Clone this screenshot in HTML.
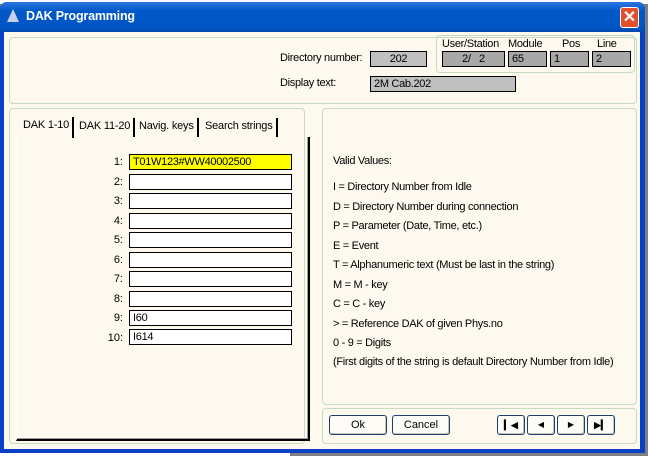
<!DOCTYPE html>
<html><head><style>
*{margin:0;padding:0;box-sizing:border-box}
body{width:648px;height:456px;overflow:hidden;background:#808080;font-family:"Liberation Sans",sans-serif;font-size:11px;color:#000;position:relative}
.a{position:absolute}
.t{position:absolute;white-space:nowrap;letter-spacing:-0.3px}
.grp{position:absolute;border:1px solid #c5dcc0;border-radius:4px}
.fld{position:absolute;border:1px solid #000;background:#c0c0c0;height:16px;line-height:14px;padding-left:3px;white-space:nowrap;letter-spacing:-0.3px}
.in{position:absolute;left:129px;width:163px;height:16px;border:1px solid #000;background:#fff;line-height:14px;padding-left:3px;letter-spacing:-0.3px}
.lb{position:absolute;left:100px;width:23px;text-align:right}
.btn{position:absolute;height:20px;border:1px solid #1c3f6e;border-radius:3px;background:#fdfcf6;text-align:center;line-height:18px;box-shadow:inset -1px -1px 0 #c9c6b8}
.tab{position:absolute;top:118px;height:19px;line-height:17px;border-right:2px solid #000;padding:0 3px;white-space:nowrap;letter-spacing:-0.2px}
</style></head><body>
<div class="a" style="left:0;top:0;width:290px;height:4px;background:#fff"></div>
<div class="a" style="left:290px;top:0;width:360px;height:4px;background:#fff"></div>
<div class="a" style="left:0;top:450px;width:290px;height:6px;background:#fff"></div>
<div class="a" style="left:0;top:2px;width:645px;height:451px;background:#0a3fc8;border-radius:7px 7px 0 0"></div>
<div class="a" style="left:0;top:2px;width:645px;height:30px;background:linear-gradient(#2b76e0,#0058c8 30%,#0055c4 85%,#0047b0);border-radius:7px 7px 0 0"></div>
<div class="a" style="left:7px;top:9px;width:0;height:0;border-left:6px solid transparent;border-right:6px solid transparent;border-bottom:13px solid #c8d0e8"></div>
<div class="t" style="left:26px;top:9px;color:#fff;font-weight:bold;font-size:12.5px;letter-spacing:-0.2px">DAK Programming</div>
<div class="a" style="left:620px;top:7px;width:19px;height:21px;background:#e0502a;border:1px solid #fff;border-radius:3px;color:#fff;font-size:16px;font-weight:bold;text-align:center;line-height:19px">✕</div>
<div class="a" style="left:4px;top:32px;width:636px;height:417px;background:#fdf9ef"></div>

<div class="grp" style="left:9px;top:37px;width:628px;height:67px"></div>
<div class="t" style="left:280px;top:52px">Directory number:</div>
<div class="fld" style="left:370px;top:51px;width:57px;text-align:center;padding:0">202</div>
<div class="grp" style="left:436px;top:35px;width:199px;height:38px"></div>
<div class="t" style="left:442px;top:38px">User/Station</div>
<div class="t" style="left:508px;top:38px">Module</div>
<div class="t" style="left:562px;top:38px">Pos</div>
<div class="t" style="left:597px;top:38px">Line</div>
<div class="fld" style="left:442px;top:51px;width:63px;background:#a8a8a8;text-align:center;padding:0">2/&nbsp;&nbsp;&nbsp;2</div>
<div class="fld" style="left:508px;top:51px;width:39px;background:#a8a8a8">65</div>
<div class="fld" style="left:550px;top:51px;width:39px;background:#a8a8a8">1</div>
<div class="fld" style="left:592px;top:51px;width:39px;background:#a8a8a8">2</div>
<div class="t" style="left:280px;top:77px">Display text:</div>
<div class="fld" style="left:370px;top:76px;width:146px">2M Cab.202</div>

<div class="grp" style="left:9px;top:108px;width:296px;height:336px"></div>
<div class="tab" style="left:20px;top:117px;height:21px;background:#fdf9ef">DAK 1-10</div>
<div class="tab" style="left:75px;border-left:1px solid #fff">DAK 11-20</div>
<div class="tab" style="left:136px">Navig. keys</div>
<div class="tab" style="left:202px">Search strings</div>
<div class="a" style="left:16px;top:137px;width:294px;height:304px;border-right:2px solid #000;border-bottom:2px solid #000;box-shadow:inset -1px -1px 0 #a0a0a0;border-left:1px solid #fff"></div>

<div class="lb" style="top:156px">1:</div><div class="in" style="top:154px;background:#ffff00">T01W123#WW40002500</div>
<div class="lb" style="top:176px">2:</div><div class="in" style="top:174px"></div>
<div class="lb" style="top:195px">3:</div><div class="in" style="top:193px"></div>
<div class="lb" style="top:215px">4:</div><div class="in" style="top:213px"></div>
<div class="lb" style="top:234px">5:</div><div class="in" style="top:232px"></div>
<div class="lb" style="top:254px">6:</div><div class="in" style="top:252px"></div>
<div class="lb" style="top:273px">7:</div><div class="in" style="top:271px"></div>
<div class="lb" style="top:293px">8:</div><div class="in" style="top:291px"></div>
<div class="lb" style="top:312px">9:</div><div class="in" style="top:310px">I60</div>
<div class="lb" style="top:332px">10:</div><div class="in" style="top:329px">I614</div>

<div class="grp" style="left:322px;top:108px;width:315px;height:297px"></div>
<div class="t" style="left:333px;top:155px">Valid Values:</div>
<div class="t" style="left:333px;top:181px">I = Directory Number from Idle</div>
<div class="t" style="left:333px;top:201px">D = Directory Number during connection</div>
<div class="t" style="left:333px;top:220px">P = Parameter (Date, Time, etc.)</div>
<div class="t" style="left:333px;top:240px">E = Event</div>
<div class="t" style="left:333px;top:259px">T = Alphanumeric text (Must be last in the string)</div>
<div class="t" style="left:333px;top:279px">M = M - key</div>
<div class="t" style="left:333px;top:298px">C = C - key</div>
<div class="t" style="left:333px;top:318px">&gt; = Reference DAK of given Phys.no</div>
<div class="t" style="left:333px;top:337px">0 - 9 = Digits</div>
<div class="t" style="left:333px;top:356px">(First digits of the string is default Directory Number from Idle)</div>

<div class="grp" style="left:322px;top:408px;width:315px;height:36px"></div>
<div class="btn" style="left:329px;top:415px;width:58px">Ok</div>
<div class="btn" style="left:392px;top:415px;width:58px">Cancel</div>
<div class="btn" style="left:497px;top:415px;width:28px;font-size:9px;font-weight:bold">▎◀</div>
<div class="btn" style="left:527px;top:415px;width:28px;font-size:8px">◀</div>
<div class="btn" style="left:557px;top:415px;width:28px;font-size:8px">▶</div>
<div class="btn" style="left:587px;top:415px;width:28px;font-size:9px;font-weight:bold">▶▎</div>
</body></html>
